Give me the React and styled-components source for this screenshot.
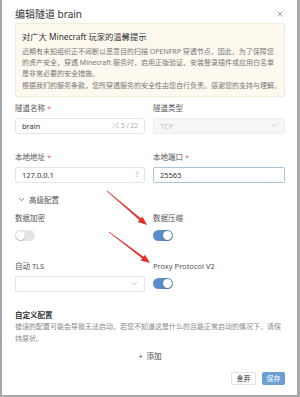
import React from "react";
import styled, { createGlobalStyle } from "styled-components";
import { Shuffle } from "lucide-react";

const Global = createGlobalStyle`
  html, body {
    margin: 0;
    padding: 0;
    background: #a8a8a8;
  }
  body {
    font-family: "Noto Sans", "Noto Sans CJK SC", sans-serif;
    color: #333;
  }
`;

const Modal = styled.div`
  position: relative;
  box-sizing: border-box;
  width: 295px;
  height: 395px;
  margin-left: 2px;
  background: #fff;
  padding: 7px 12px 0 13px;
  overflow: hidden;
`;

const Header = styled.div`
  display: flex;
  align-items: center;
  justify-content: space-between;
  height: 14px;
`;

const Title = styled.div`
  font-size: 10px;
  line-height: 14px;
  color: #333;
`;

const Close = styled.div`
  display: flex;
  width: 8px;
  height: 8px;
  margin-right: 1px;
`;

const Alert = styled.div`
  box-sizing: border-box;
  margin-top: 2px;
  height: 74px;
  padding: 7px 6px 0 6px;
  background: #fdf9ef;
  border: 1px solid #f3ebd8;
  border-radius: 2px;
`;

const AlertTitle = styled.div`
  font-size: 8.3px;
  line-height: 12px;
  color: #333;
`;

const AlertText = styled.div`
  margin-top: ${p => p.$gap || 0}px;
  font-size: 7px;
  line-height: 11px;
  color: #777;
  white-space: nowrap;
`;

const Grid = styled.div`
  display: grid;
  grid-template-columns: 130px 132px;
  column-gap: 8px;
  row-gap: ${p => p.$rowGap}px;
  margin-top: ${p => p.$top}px;
`;

const Field = styled.div`
  display: flex;
  flex-direction: column;
`;

const Label = styled.div`
  font-size: 7.5px;
  line-height: 10px;
  color: #555;
  height: 10px;

  span {
    color: #e36d6d;
  }
`;

const Input = styled.div`
  box-sizing: border-box;
  margin-top: 4.5px;
  height: 16px;
  display: flex;
  align-items: center;
  justify-content: space-between;
  padding: 0 6px;
  border: 1px solid ${p => (p.$focused ? "#a9c7d9" : p.$disabled ? "#eeeeee" : "#e6e6e6")};
  border-radius: 2px;
  background: ${p => (p.$disabled ? "#f6f6f6" : "#fff")};
  font-size: 7.5px;
  color: ${p => (p.$disabled ? "#c6c6c6" : "#333")};
`;

const Suffix = styled.div`
  display: flex;
  align-items: center;
  gap: 2px;
  color: #aaa;
  font-size: 6.5px;
`;

const Switch = styled.div`
  position: relative;
  box-sizing: border-box;
  margin-top: ${p => p.$top}px;
  width: 20px;
  height: 11px;
  border-radius: 6px;
  background: ${p => (p.$on ? "#5b8dca" : "#e4e4e4")};

  &::after {
    content: "";
    position: absolute;
    top: 1px;
    left: ${p => (p.$on ? "10px" : "1px")};
    width: 9px;
    height: 9px;
    border-radius: 50%;
    background: #fff;
    box-shadow: 0 0.5px 1.5px rgba(0, 0, 0, 0.3);
  }
`;

const Collapse = styled.div`
  margin-top: 12px;
  display: flex;
  align-items: center;
  gap: 4px;
  padding-left: 3px;
  height: 10px;
  font-size: 7.5px;
  line-height: 10px;
  color: #555;
`;

const Section = styled.div`
  margin-top: 18px;
`;

const SectionTitle = styled.div`
  font-size: 7.5px;
  line-height: 10px;
  font-weight: 600;
  color: #333;
`;

const SectionText = styled.div`
  margin-top: 1px;
  font-size: 7px;
  line-height: 12px;
  color: #888;
`;

const Add = styled.div`
  margin-top: 6px;
  text-align: center;
  font-size: 7.5px;
  line-height: 10px;
  color: #444;
`;

const Footer = styled.div`
  margin-top: 11px;
  display: flex;
  justify-content: flex-end;
  gap: 6px;
`;

const Button = styled.div`
  box-sizing: border-box;
  height: 13px;
  width: ${p => p.$w}px;
  display: flex;
  align-items: center;
  justify-content: center;
  border-radius: 2px;
  font-size: 7px;
  border: 1px solid ${p => (p.$primary ? "#6b9fd4" : "#e2e2e2")};
  background: ${p => (p.$primary ? "#6b9fd4" : "#fff")};
  color: ${p => (p.$primary ? "#fff" : "#333")};
`;

const Overlay = styled.svg`
  position: absolute;
  left: 0;
  top: 0;
  pointer-events: none;
`;

const Chevron = ({ color = "#bbb" }) => (
  <svg width="7" height="5" viewBox="0 0 7 5">
    <path d="M1 1.2 L3.5 3.6 L6 1.2" fill="none" stroke={color} strokeWidth="0.8" />
  </svg>
);

const Arrow = ({ x1, y1, x2, y2 }) => {
  const dx = x2 - x1;
  const dy = y2 - y1;
  const L = Math.sqrt(dx * dx + dy * dy);
  const a = (Math.atan2(dy, dx) * 180) / Math.PI;
  return (
    <g transform={`translate(${x1} ${y1}) rotate(${a})`} fill="#e2322b">
      <polygon points={`0,-0.4 ${L - 8},-1.1 ${L - 8},1.1 0,0.4`} />
      <polygon points={`${L - 9},-3.6 ${L},0 ${L - 9},3.6`} />
    </g>
  );
};

export default function App() {
  return (
    <>
      <Global />
      <Modal>
        <Header>
          <Title>编辑隧道 brain</Title>
          <Close>
            <svg width="8" height="8" viewBox="0 0 8 8">
              <path d="M1.5 1.5 L6.5 6.5 M6.5 1.5 L1.5 6.5" stroke="#888" strokeWidth="0.8" />
            </svg>
          </Close>
        </Header>

        <Alert>
          <AlertTitle>对广大 Minecraft 玩家的温馨提示</AlertTitle>
          <AlertText $gap={2.5}>
            近期有未知组织正不间断以恶意目的扫描 OPENFRP 穿透节点，因此，为了保障您
            <br />
            的资产安全，穿透 Minecraft 服务时，启用正版验证、安装登录插件或应用白名单
            <br />
            是非常必要的安全措施。
          </AlertText>
          <AlertText $gap={1}>
            根据我们的服务条款，您所穿透服务的安全性由您自行负责。感谢您的支持与理解。
          </AlertText>
        </Alert>

        <Grid $top={6} $rowGap={18.5}>
          <Field>
            <Label>隧道名称 <span>*</span></Label>
            <Input>
              brain
              <Suffix>
                <Shuffle size={7} strokeWidth={1.5} />
                5 / 22
              </Suffix>
            </Input>
          </Field>
          <Field>
            <Label>隧道类型</Label>
            <Input $disabled>
              TCP
              <Chevron color="#ccc" />
            </Input>
          </Field>
          <Field>
            <Label>本地地址 <span>*</span></Label>
            <Input>
              127.0.0.1
              <Suffix>?</Suffix>
            </Input>
          </Field>
          <Field>
            <Label>本地端口 <span>*</span></Label>
            <Input $focused>25565</Input>
          </Field>
        </Grid>

        <Collapse>
          <Chevron color="#666" />
          高级配置
        </Collapse>

        <Grid $top={8} $rowGap={20.5}>
          <Field>
            <Label>数据加密</Label>
            <Switch $top={7} />
          </Field>
          <Field>
            <Label>数据压缩</Label>
            <Switch $top={7} $on />
          </Field>
          <Field>
            <Label>自动 TLS</Label>
            <Input>
              <span />
              <Chevron />
            </Input>
          </Field>
          <Field>
            <Label>Proxy Protocol V2</Label>
            <Switch $top={6.5} $on />
          </Field>
        </Grid>

        <Section>
          <SectionTitle>自定义配置</SectionTitle>
          <SectionText>
            错误的配置可能会导致无法启动，若您不知道这是什么的且能正常启动的情况下，请保
            <br />
            持原状。
          </SectionText>
        </Section>

        <Add>+&nbsp; 添加</Add>

        <Footer>
          <Button $w={25}>舍弃</Button>
          <Button $w={23} $primary>保存</Button>
        </Footer>

        <Overlay width="295" height="395">
          <Arrow x1={105} y1={191} x2={145} y2={225} />
          <Arrow x1={107} y1={232} x2={148} y2={263} />
        </Overlay>
      </Modal>
    </>
  );
}
